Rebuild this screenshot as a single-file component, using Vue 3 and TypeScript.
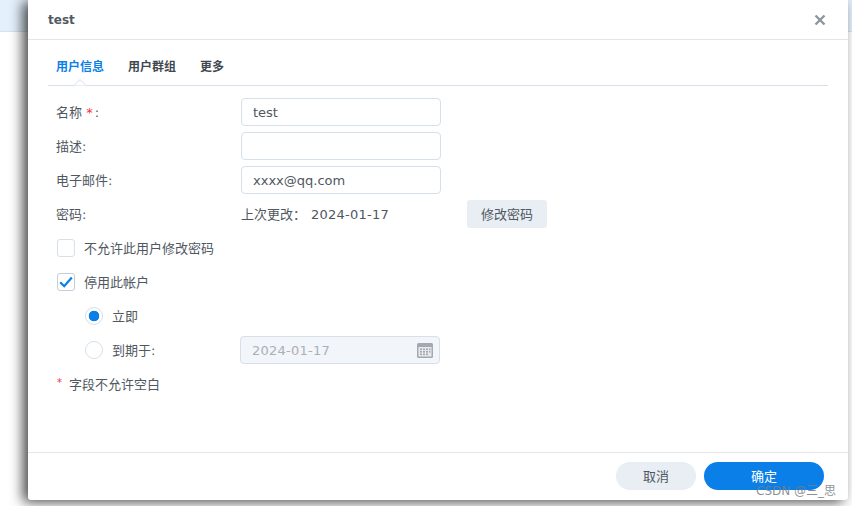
<script setup lang="ts">
const tabs: string[] = ['用户信息', '用户群组', '更多']
</script>

<template>
  <div class="page">
    <div class="backdrop-strip"></div>
    <div class="dialog">
      <header class="head">
        <span class="title">test</span>
        <svg class="close" width="12" height="12" viewBox="0 0 12 12"><path d="M1.5 1.5l9 9M10.5 1.5l-9 9" stroke="#8e959d" stroke-width="2.4" fill="none"/></svg>
      </header>
      <main class="body">
        <nav class="tabs">
          <span v-for="(t, i) in tabs" :key="t" class="tab" :class="{ active: i === 0 }">{{ t }}</span>
          <svg class="notch" width="14" height="8" viewBox="0 0 14 8"><path d="M0 7.5h1L7 1.5l6 6h1" stroke="#d7e0ea" fill="#fff"/></svg>
        </nav>
        <div class="form">
          <div class="row">
            <label class="lab cjk">名称 <i>*</i>:</label>
            <div class="input">test</div>
          </div>
          <div class="row">
            <label class="lab cjk">描述:</label>
            <div class="input"></div>
          </div>
          <div class="row">
            <label class="lab cjk">电子邮件:</label>
            <div class="input">xxxx@qq.com</div>
          </div>
          <div class="row">
            <label class="lab cjk">密码:</label>
            <div class="pw">
              <span class="pw-lab cjk">上次更改：</span>
              <span class="latin">2024-01-17</span>
            </div>
            <button class="btn-pw cjk">修改密码</button>
          </div>
          <div class="row check-row">
            <span class="box"></span>
            <span class="cjk">不允许此用户修改密码</span>
          </div>
          <div class="row check-row">
            <span class="box on">
              <svg width="14" height="12" viewBox="0 0 14 12"><path d="M1.2 6.2l4 4 7.6-8.6" stroke="#0a7fe8" stroke-width="2.2" fill="none"/></svg>
            </span>
            <span class="cjk">停用此帐户</span>
          </div>
          <div class="row check-row sub">
            <span class="radio on"></span>
            <span class="cjk">立即</span>
          </div>
          <div class="row check-row sub">
            <span class="radio"></span>
            <span class="exp-lab cjk">到期于:</span>
            <div class="input date">
              <span class="latin">2024-01-17</span>
              <svg width="16" height="15" viewBox="0 0 16 15"><rect width="16" height="15" rx="1.5" fill="#a4a9af"/><rect x="1.5" y="4" width="13" height="9.5" fill="#e8eaed"/><g fill="#a4a9af"><rect x="3" y="5.5" width="2" height="1.6"/><rect x="6" y="5.5" width="2" height="1.6"/><rect x="9" y="5.5" width="2" height="1.6"/><rect x="12" y="5.5" width="1.5" height="1.6"/><rect x="3" y="8" width="2" height="1.6"/><rect x="6" y="8" width="2" height="1.6"/><rect x="9" y="8" width="2" height="1.6"/><rect x="12" y="8" width="1.5" height="1.6"/><rect x="3" y="10.5" width="2" height="1.6"/><rect x="6" y="10.5" width="2" height="1.6"/><rect x="9" y="10.5" width="2" height="1.6"/></g></svg>
            </div>
          </div>
          <div class="row note"><i>*</i><span class="cjk">字段不允许空白</span></div>
        </div>
      </main>
      <footer class="foot">
        <button class="pill cancel cjk">取消</button>
        <button class="pill ok cjk">确定</button>
      </footer>
    </div>
    <span class="mark">CSDN @三_思</span>
  </div>
</template>

<style scoped>
.page {
  position: relative;
  width: 852px;
  height: 506px;
  overflow: hidden;
  background: #fff;
  font-family: "DejaVu Sans", "Noto Sans CJK SC", sans-serif;
  font-size: 13px;
  color: #4f5861;
}
.backdrop-strip {
  height: 31px;
  background: #e4f0fc;
  border-bottom: 1px solid #d8e2ec;
}
.dialog {
  position: absolute;
  left: 28px;
  top: 0;
  width: 820px;
  height: 500px;
  display: flex;
  flex-direction: column;
  background: #fff;
  box-shadow: -5px 2px 13px rgba(0, 0, 0, 0.72);
  border-radius: 0 0 3px 3px;
}
.head {
  height: 39px;
  flex: none;
  box-sizing: content-box;
  display: flex;
  align-items: center;
  justify-content: space-between;
  padding: 0 22px 0 20px;
  border-bottom: 1px solid #e3e7ec;
}
.title {
  font-weight: 700;
  font-size: 12px;
  color: #525a63;
}
.body {
  flex: 1;
  padding: 0 20px;
}
.tabs {
  position: relative;
  display: flex;
  gap: 24px;
  box-sizing: content-box;
  padding: 1px 8px 0;
  align-items: center;
  height: 44px;
  border-bottom: 1px solid #d7e0ea;
}
.tab {
  font-family: "Noto Sans CJK SC", sans-serif;
  font-size: 12px;
  font-weight: 700;
  color: #3f4850;
  position: relative;
  top: 2px;
}
.tab.active {
  color: #0a7fe8;
}
.notch {
  position: absolute;
  left: 25px;
  bottom: -1px;
}
.form {
  padding: 12px 0 0 8px;
}
.row {
  height: 28px;
  margin-bottom: 6px;
  display: flex;
  align-items: center;
}
.cjk {
  padding-bottom: 2px;
}
.btn-pw,
.pill {
  font-family: "Noto Sans CJK SC", sans-serif;
}
.lab {
  width: 185px;
  flex: none;
}
.lab i,
.note i {
  color: #f0334a;
  font-style: normal;
}
.lab i {
  margin-right: 2px;
}
.input {
  box-sizing: border-box;
  width: 200px;
  height: 28px;
  border: 1px solid #d5e0ea;
  border-radius: 4px;
  padding: 0 11px;
  display: flex;
  align-items: center;
  background: #fff;
}
.pw {
  width: 226px;
  flex: none;
  display: flex;
  align-items: center;
}
.pw-lab {
  width: 70px;
  flex: none;
}
.latin {
  letter-spacing: 0.25px;
}
.btn-pw {
  width: 80px;
  height: 28px;
  border: 0;
  border-radius: 3px;
  background: #e9eef5;
  color: #4f5861;
  font-size: 13px;
  padding-top: 0;
  padding-left: 0;
  padding-right: 0;
}
.check-row {
  padding-left: 1px;
}
.box {
  box-sizing: border-box;
  width: 18px;
  height: 18px;
  border: 1px solid #d5e0ea;
  border-radius: 3px;
  margin-right: 9px;
  display: flex;
  align-items: center;
  justify-content: center;
  flex: none;
}
.box.on {
  border-color: #c4cdd8;
}
.sub {
  padding-left: 29px;
}
.radio {
  box-sizing: border-box;
  width: 18px;
  height: 18px;
  border: 1px solid #d5e0ea;
  border-radius: 50%;
  margin-right: 9px;
  flex: none;
  display: block;
}
.radio.on {
  background: radial-gradient(circle, #0a7fe8 0 5px, #fff 5.6px);
}
.exp-lab {
  width: 128px;
  flex: none;
}
.date {
  background: #f2f5fa;
  color: #a9b0b8;
  justify-content: space-between;
  padding-right: 6px;
}
.note {
  gap: 8px;
}
.note i {
  font-size: 10px;
  position: relative;
  top: -2px;
  left: 1px;
}
.foot {
  box-sizing: border-box;
  height: 48px;
  flex: none;
  border-top: 1px solid #e3e7ec;
  display: flex;
  justify-content: flex-end;
  gap: 8px;
  padding: 9px 24px 0 0;
  align-items: flex-start;
}
.pill {
  height: 28px;
  border: 0;
  border-radius: 14px;
  font-size: 13px;
  padding-top: 0;
  padding-left: 0;
  padding-right: 0;
}
.cancel {
  width: 80px;
  background: #e9eef5;
  color: #4f5861;
}
.ok {
  width: 120px;
  background: #0a7fe8;
  color: #fff;
}
.mark {
  position: absolute;
  left: 756px;
  top: 484px;
  font-family: "DejaVu Sans", "Noto Sans CJK SC", sans-serif;
  font-size: 12px;
  line-height: 14px;
  color: rgba(120, 125, 130, 0.85);
  white-space: nowrap;
}
</style>
